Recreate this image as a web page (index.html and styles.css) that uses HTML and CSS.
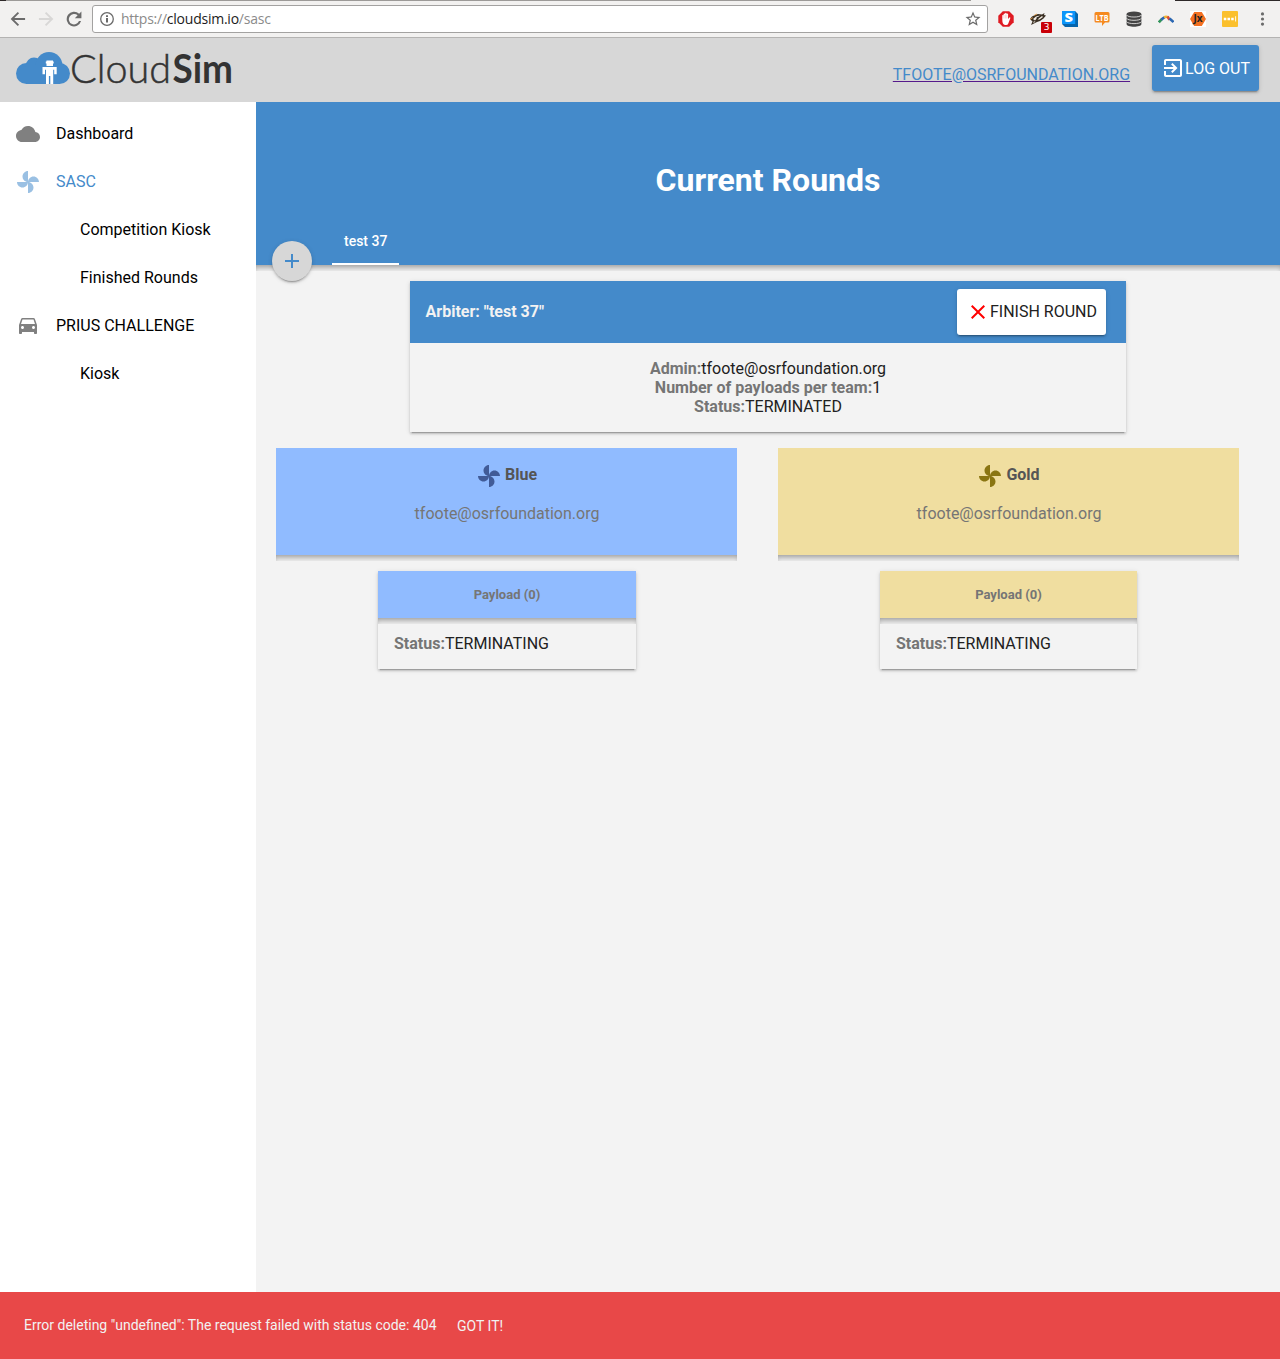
FILE: index.html
```html
<!DOCTYPE html>
<html lang="en">
<head>
<meta charset="utf-8">
<title>CloudSim</title>
<link rel="stylesheet" href="styles.css">
</head>
<body>
<svg class="defs" width="0" height="0" aria-hidden="true">
  <symbol id="fan" viewBox="0 0 24 24"><path d="M12 12c0-3 2.5-5.5 5.5-5.5S23 9 23 12H12zm0 0c0 3-2.5 5.5-5.5 5.5S1 15 1 12h11zm0 0c-3 0-5.5-2.5-5.5-5.5S9 1 12 1v11zm0 0c3 0 5.5 2.5 5.5 5.5S15 23 12 23V12z"/></symbol>
</svg>

<div class="browser">
  <div class="nav-buttons">
    <svg width="20" height="20" viewBox="0 0 24 24" fill="#6b6b6b"><path d="M20.5 10.8H7.6l5.7-5.7L11.700 3.500 3.200 12l8.500 8.500 1.600-1.600-5.700-5.700h12.900z"/></svg>
    <svg width="20" height="20" viewBox="0 0 24 24" fill="#d8d7d6"><path d="M3.500 10.800h12.900l-5.700-5.700 1.600-1.600 8.500 8.500-8.500 8.500-1.600-1.600 5.700-5.700H3.500z"/></svg>
    <svg width="20" height="20" viewBox="0 0 24 24" fill="#6b6b6b"><path d="M18.200 5.800A8.800 8.800 0 1 0 20.500 14.500h-2.500A6.300 6.300 0 1 1 16.400 7.600L13 11h7.900V3.100z"/></svg>
  </div>
  <div class="omnibox">
    <svg width="16" height="16" viewBox="0 0 16 16"><circle cx="8" cy="8" r="6.300" fill="none" stroke="#6b6b6b" stroke-width="1.300"/><path d="M7.100 7h1.800v4.500H7.100zM7.100 4.300h1.800v1.800H7.100z" fill="#5a5a5a"/></svg>
    <span class="url">https://<b>cloudsim.io</b>/sasc</span>
    <svg width="18" height="18" viewBox="0 0 24 24" fill="#6b6b6b"><path d="M22 9.240l-7.190-.62L12 2 9.190 8.630 2 9.240l5.460 4.730L5.820 21 12 17.270 18.180 21l-1.630-7.030L22 9.240zM12 15.400l-3.760 2.270 1-4.280-3.320-2.880 4.380-.38L12 6.100l1.710 4.040 4.380.38-3.320 2.880 1 4.280L12 15.400z"/></svg>
  </div>
  <div class="extensions">
    <svg width="16" height="16" viewBox="0 0 16 16"><path d="M4.800.3h6.400l4.500 4.500v6.400l-4.500 4.500H4.800L.3 11.200V4.800z" fill="#df1a22"/><path d="M4.300 8.500V4.300q.7-.8 1.300 0V3q.8-.9 1.500 0v-.8q.8-.9 1.500 0V3q.8-.9 1.500 0v5l1.300-1.600q1.100-.2.900.8l-2 5.300q-.5 1.500-2.300 1.500H7q-2.700-.2-2.700-5.500z" fill="#fff"/><path d="M5.900 4v3.500M7.400 3.500v4M8.800 3.500v4" stroke="#e99" stroke-width=".4"/></svg>
    <span class="badged">
      <svg width="16" height="16" viewBox="0 0 16 16"><path d="M0 8l2-2.500L5 4l3-1 4 .5L14.500 2l-.5 2 2 .5-2.500 3L10 10l-3 1-4 2-2 1 1.500-3.500z" fill="#3b3024"/><path d="M3 8l3-2.500 4-1L7 7l-2 2.500zM7.500 8.500L12 5l1 1-3.500 2.500zM3 11l2.500-1L4 12z" fill="#f4eee5"/><path d="M6 7l3-1.500-1.500 2z" fill="#111"/><path d="M0 8.500l3-2M4 4.500l3-1.500" stroke="#e59a43" stroke-width=".8"/></svg>
      <span class="badge">3</span>
    </span>
    <svg width="16" height="16" viewBox="0 0 16 16"><path d="M0 1l1-1h12l3 3v13H3l-3-3z" fill="#0765ac"/><path d="M0 0h13.200v13H0z" fill="#0c95fa"/><text x="6.700" y="10.500" text-anchor="middle" textLength="8.500" lengthAdjust="spacingAndGlyphs" class="glyph-s">S</text></svg>
    <svg width="16" height="16" viewBox="0 0 16 16"><path d="M2 1h12q1.500 0 1.500 1.500v7.500q0 1.500-1.500 1.500h-3L8 15v-3.500H2Q.5 11.500.5 10V2.500Q.5 1 2 1z" fill="#f58a1f"/><text x="8" y="9.500" text-anchor="middle" textLength="13" lengthAdjust="spacingAndGlyphs" class="glyph-ltb">LTB</text></svg>
    <svg width="16" height="16" viewBox="0 0 16 16"><path d="M.6 3v10c0 3.600 14.800 3.600 14.800 0V3z" fill="#444"/><ellipse cx="8" cy="3" rx="7.400" ry="2.500" fill="#444"/><path d="M.6 4c1 2.700 13.800 2.700 14.800 0M.6 7.300c1 2.700 13.800 2.700 14.800 0M.6 10.600c1 2.700 13.800 2.700 14.800 0" fill="none" stroke="#f2f1f0" stroke-width=".8"/></svg>
    <svg width="16" height="16" viewBox="0 0 16 16" fill="none" stroke-width="2.600"><path d="M.8 11.300l2.800-3" stroke="#32945a"/><path d="M3.200 8.600l3.300-2.300" stroke="#2b67b2"/><path d="M6.200 6.300q1.800-1.200 4 0" stroke="#f2b632"/><path d="M9.500 5.500l2 3.200" stroke="#d94c38"/><path d="M11.500 7.500l4 3.500" stroke="#2b67b2"/></svg>
    <svg width="16" height="16" viewBox="0 0 16 16"><path d="M0 0h16v16H0z" fill="#fff"/><path d="M4.200 1h7.600L16 8l-4.200 7H4.200L0 8z" fill="#f37021"/><text x="8" y="11.300" text-anchor="middle" class="glyph-jx">Jx</text></svg>
    <svg width="16" height="16" viewBox="0 0 16 16"><rect width="16" height="16" rx="1" fill="#fbc02d"/><path d="M1.800 6.700h2.500v2.500H1.800zM5.500 6.700H8v2.500H5.500zM9.200 6.700h2.500v2.500H9.200zM13.200 5.300h.9v5.300h-.9z" fill="#fff"/></svg>
    <svg width="16" height="16" viewBox="0 0 16 16" fill="#6b6b6b"><circle cx="8.500" cy="2.900" r="1.600"/><circle cx="8.500" cy="8" r="1.600"/><circle cx="8.500" cy="13.100" r="1.600"/></svg>
  </div>
</div>

<header class="app-header">
  <svg class="logo" width="218" height="40" viewBox="0 0 218 40">
    <g fill="#448aca"><circle cx="10.500" cy="21.500" r="10.500"/><circle cx="18" cy="13.700" r="8.200"/><circle cx="33" cy="13.500" r="13.500"/><circle cx="43.500" cy="21.500" r="10.500"/><path d="M10 14h34v18H10z"/></g>
    <path d="M30.500 8.500h6.500v1h.7v2H37V14h-6.500v-2.500h-.7v-2h.7zM26.500 15h14.200v7.300h-2.500v-4.500h-1V32h-2.900v-8h-1.400v8H30v-14.200h-1v4.500h-2.500z" fill="#fff"/>
    <text x="54" y="30.500" class="logo-light" textLength="101" lengthAdjust="spacingAndGlyphs">Cloud</text>
    <text x="156.500" y="30.500" class="logo-bold" textLength="60.500" lengthAdjust="spacingAndGlyphs">Sim</text>
  </svg>
  <a class="account">tfoote@osrfoundation.org</a>
  <button class="btn btn-logout">
    <svg width="24" height="24" viewBox="0 0 24 24"><path d="M10.090 15.590L11.500 17l5-5-5-5-1.410 1.410L12.670 11H3v2h9.670l-2.580 2.590zM19 3H5c-1.110 0-2 .9-2 2v4h2V5h14v14H5v-4H3v4c0 1.100.89 2 2 2h14c1.100 0 2-.9 2-2V5c0-1.100-.9-2-2-2z"/></svg>
    <span>Log out</span>
  </button>
</header>

<div class="layout">
  <nav class="sidebar">
    <a class="item"><svg width="24" height="24" viewBox="0 0 24 24"><path d="M19.350 10.040C18.670 6.590 15.640 4 12 4 9.110 4 6.600 5.640 5.350 8.040 2.340 8.360 0 10.910 0 14c0 3.310 2.690 6 6 6h13c2.760 0 5-2.240 5-5 0-2.640-2.050-4.780-4.650-4.960z"/></svg><span>Dashboard</span></a>
    <a class="item active"><svg width="24" height="24"><use href="#fan"/></svg><span>SASC</span></a>
    <a class="item sub"><span>Competition Kiosk</span></a>
    <a class="item sub"><span>Finished Rounds</span></a>
    <a class="item"><svg width="24" height="24" viewBox="0 1 24 24"><path d="M18.920 6.010C18.720 5.420 18.160 5 17.500 5h-11c-.66 0-1.210.42-1.420 1.010L3 12v8c0 .55.45 1 1 1h1c.55 0 1-.45 1-1v-1h12v1c0 .55.45 1 1 1h1c.55 0 1-.45 1-1v-8l-2.080-5.990zM6.500 16c-.83 0-1.500-.67-1.500-1.500S5.670 13 6.500 13s1.500.67 1.500 1.500S7.330 16 6.500 16zm11 0c-.83 0-1.500-.67-1.500-1.500s.67-1.500 1.500-1.500 1.500.67 1.500 1.500-.67 1.500-1.500 1.500zM5 11l1.500-4.500h11L19 11H5z"/></svg><span>PRIUS CHALLENGE</span></a>
    <a class="item sub"><span>Kiosk</span></a>
  </nav>

  <main class="main">
    <div class="toolbar">
      <h1>Current Rounds</h1>
      <div class="tabs"><div class="tab">test 37</div></div>
      <button class="fab"><svg width="24" height="24" viewBox="0 0 24 24"><path d="M19 13h-6v6h-2v-6H5v-2h6V5h2v6h6v2z"/></svg></button>
    </div>
    <div class="header-shadow"></div>

    <section class="card arbiter">
      <div class="arbiter-head">
        <h2>Arbiter: "test 37"</h2>
        <button class="btn btn-finish">
          <svg width="24" height="24" viewBox="0 0 24 24"><path d="M19 6.410L17.590 5 12 10.590 6.410 5 5 6.410 10.590 12 5 17.590 6.410 19 12 13.410 17.590 19 19 17.590 13.410 12z"/></svg>
          <span>Finish round</span>
        </button>
      </div>
      <div class="arbiter-body">
        <div><b>Admin:</b>tfoote@osrfoundation.org</div>
        <div><b>Number of payloads per team:</b>1</div>
        <div><b>Status:</b>TERMINATED</div>
      </div>
    </section>

    <div class="teams">
      <section class="team blue">
        <div class="team-head">
          <h3><svg width="24" height="24"><use href="#fan"/></svg><span>Blue</span></h3>
          <p>tfoote@osrfoundation.org</p>
        </div>
        <div class="header-shadow"></div>
        <div class="card payload">
          <h4>Payload (0)</h4>
          <div class="header-shadow"></div>
          <div class="payload-body"><b>Status:</b>TERMINATING</div>
        </div>
      </section>
      <section class="team gold">
        <div class="team-head">
          <h3><svg width="24" height="24"><use href="#fan"/></svg><span>Gold</span></h3>
          <p>tfoote@osrfoundation.org</p>
        </div>
        <div class="header-shadow"></div>
        <div class="card payload">
          <h4>Payload (0)</h4>
          <div class="header-shadow"></div>
          <div class="payload-body"><b>Status:</b>TERMINATING</div>
        </div>
      </section>
    </div>
  </main>
</div>

<footer class="toast">
  <span>Error deleting "undefined": The request failed with status code: 404</span>
  <button class="toast-action">Got it!</button>
</footer>
</body>
</html>
```

FILE: styles.css
```css
* { box-sizing: border-box; }

body {
  margin: 0;
  height: 1359px;
  display: flex;
  flex-direction: column;
  overflow: hidden;
  font: 16px/19px Roboto, sans-serif;
  color: #212121;
  background: #f3f3f3;
}

h1, h2, h3, h4, p { margin: 0; }
button { border: 0; font: inherit; }
svg { display: block; flex: none; }
.defs { position: absolute; }

/* Browser chrome */
.browser {
  flex: none;
  height: 38px;
  padding: 1px 9px 0 8px;
  display: flex;
  align-items: center;
  background:
    linear-gradient(90deg, #2d2828 6px, #9c9a98 6px, #9c9a98 971px, #f2f1f0 971px, #f2f1f0 1175px, #2d2828 1175px) top / 100% 1px no-repeat,
    #f2f1f0;
  border-bottom: 1px solid #b4b3b2;
}
.nav-buttons { display: flex; gap: 8px; width: 84px; }
.omnibox {
  width: 896px;
  height: 28px;
  padding: 0 5px 0 6px;
  display: flex;
  align-items: center;
  background: #fff;
  border: 1px solid #a3a2a1;
  border-radius: 3px;
}
.url {
  flex: 1;
  margin-left: 6px;
  font: 14px/18px "Open Sans", sans-serif;
  letter-spacing: -0.24px;
  color: #8b8b8b;
}
.url b { font-weight: 400; color: #1c1c1c; }
.extensions { display: flex; gap: 16px; margin-left: 10px; }
.badged { position: relative; }
.badge {
  position: absolute;
  left: 11px;
  top: 11px;
  width: 11px;
  height: 11px;
  background: #c90008;
  border-radius: 1px;
  color: #fff;
  font: 9px/11px "DejaVu Sans", sans-serif;
  text-align: center;
}
.glyph-s { font: 800 11.5px "Open Sans", sans-serif; fill: #fff; }
.glyph-ltb { font: 700 9px "Open Sans", sans-serif; fill: #fff; }
.glyph-jx { font: 700 10px "Open Sans", sans-serif; fill: #222; }

/* App header */
.app-header {
  flex: none;
  height: 64px;
  padding: 0 21px 0 16px;
  display: flex;
  align-items: flex-start;
  background: #d7d7d7;
}
.logo { margin: 14px auto 0 0; overflow: visible; }
.logo-light { font: 300 40px Lato, sans-serif; fill: #333; stroke: #333; stroke-width: .5px; }
.logo-bold { font: 700 40px Lato, sans-serif; fill: #333; }
.account {
  margin: 27px 22px 0 0;
  color: #448aca;
  text-transform: uppercase;
  text-decoration: underline #551a8b;
}
.btn {
  display: flex;
  align-items: center;
  height: 46px;
  padding: 0 9px;
  border-radius: 3px;
  text-transform: uppercase;
  box-shadow: 0 2px 2px 0 rgba(0,0,0,.14), 0 1px 5px 0 rgba(0,0,0,.12), 0 3px 1px -2px rgba(0,0,0,.2);
}
.btn-logout { margin-top: 7px; background: #448aca; color: #fff; }
.btn-logout svg { fill: #fff; }
.btn-finish { margin-right: 20px; background: #fff; color: #212121; }
.btn-finish svg { fill: #f00; }
.btn-finish span { margin-bottom: 2px; }

/* Sidebar */
.layout { flex: 1; display: flex; min-height: 0; }
.sidebar { width: 256px; padding-top: 8px; background: #fff; color: #000; }
.item { display: flex; align-items: center; height: 48px; padding: 0 16px; }
.item svg { margin-right: 16px; fill: #808080; }
.item span { margin-bottom: 2px; }
.item.sub { padding-left: 80px; }
.item.active { color: #448aca; }
.item.active svg { fill: #9ac0e3; }
.item:nth-child(5) svg { margin-bottom: 2px; margin-top: 2px; }

/* Main panel */
.main { flex: 1; }
.toolbar {
  position: relative;
  height: 163px;
  display: flex;
  flex-direction: column;
  justify-content: flex-end;
  background: #448aca;
  color: #fff;
}
.toolbar h1 { font-size: 32px; line-height: 38px; text-align: center; margin-bottom: 18px; }
.tabs { display: flex; height: 48px; padding-left: 76px; }
.tab {
  padding: 0 12px;
  border-bottom: 2px solid #fff;
  font-size: 14px;
  font-weight: 500;
  line-height: 48px;
}
.fab {
  position: absolute;
  left: 16px;
  bottom: -16px;
  width: 40px;
  height: 40px;
  padding: 8px;
  border-radius: 50%;
  background: #d7d7d7;
  box-shadow: 0 2px 2px 0 rgba(0,0,0,.14), 0 1px 5px 0 rgba(0,0,0,.12), 0 3px 1px -2px rgba(0,0,0,.2);
}
.fab svg { fill: #448aca; }
.header-shadow { height: 6px; box-shadow: inset 0 5px 6px -3px rgba(0,0,0,.4); }
.card {
  background: #f3f3f3;
  box-shadow: 0 2px 2px 0 rgba(0,0,0,.14), 0 1px 5px 0 rgba(0,0,0,.12), 0 3px 1px -2px rgba(0,0,0,.2);
}
b { color: #757575; }

.arbiter { width: 716px; margin: 10px auto 0 154px; }
.arbiter-head {
  height: 62px;
  padding-left: 15.600px;
  display: flex;
  align-items: center;
  justify-content: space-between;
  background: #448aca;
}
.arbiter-head h2 { margin-bottom: 2px; font-size: 16px; line-height: 19px; color: #f2f2f2; }
.arbiter-body { padding: 16px; text-align: center; }

.teams { display: flex; gap: 41px; margin: 16px 0 0 20px; }
.team { width: 461px; }
.team-head { height: 107px; padding: 14px 0 0 1px; text-align: center; color: #757575; }
.team h3 {
  display: flex;
  justify-content: center;
  gap: 4px;
  height: 24px;
  font-size: 16px;
  line-height: 25px;
  color: #555;
}
.team h3 svg { margin-top: 2px; }
.team p { margin-top: 18px; }
.blue .team-head, .blue h4 { background: #90bbff; }
.gold .team-head, .gold h4 { background: #f0dea0; }
.blue h3 svg { fill: #415b97; }
.gold h3 svg { fill: #8a7512; }
.payload { width: 258px; margin: 10px auto 0 102px; }
.gold .payload { width: 257px; }
.payload h4 { font-size: 13px; line-height: 47px; text-align: center; color: #757575; }
.payload-body { padding: 10px 16px 16px; }

/* Error toast */
.toast {
  flex: none;
  height: 67px;
  padding-left: 24px;
  display: flex;
  align-items: center;
  gap: 20.500px;
  font-size: 14px;
  color: #f2f2f2;
  background: #e84848;
}
.toast-action { padding: 2px 0 0; background: none; color: inherit; text-transform: uppercase; }
```
